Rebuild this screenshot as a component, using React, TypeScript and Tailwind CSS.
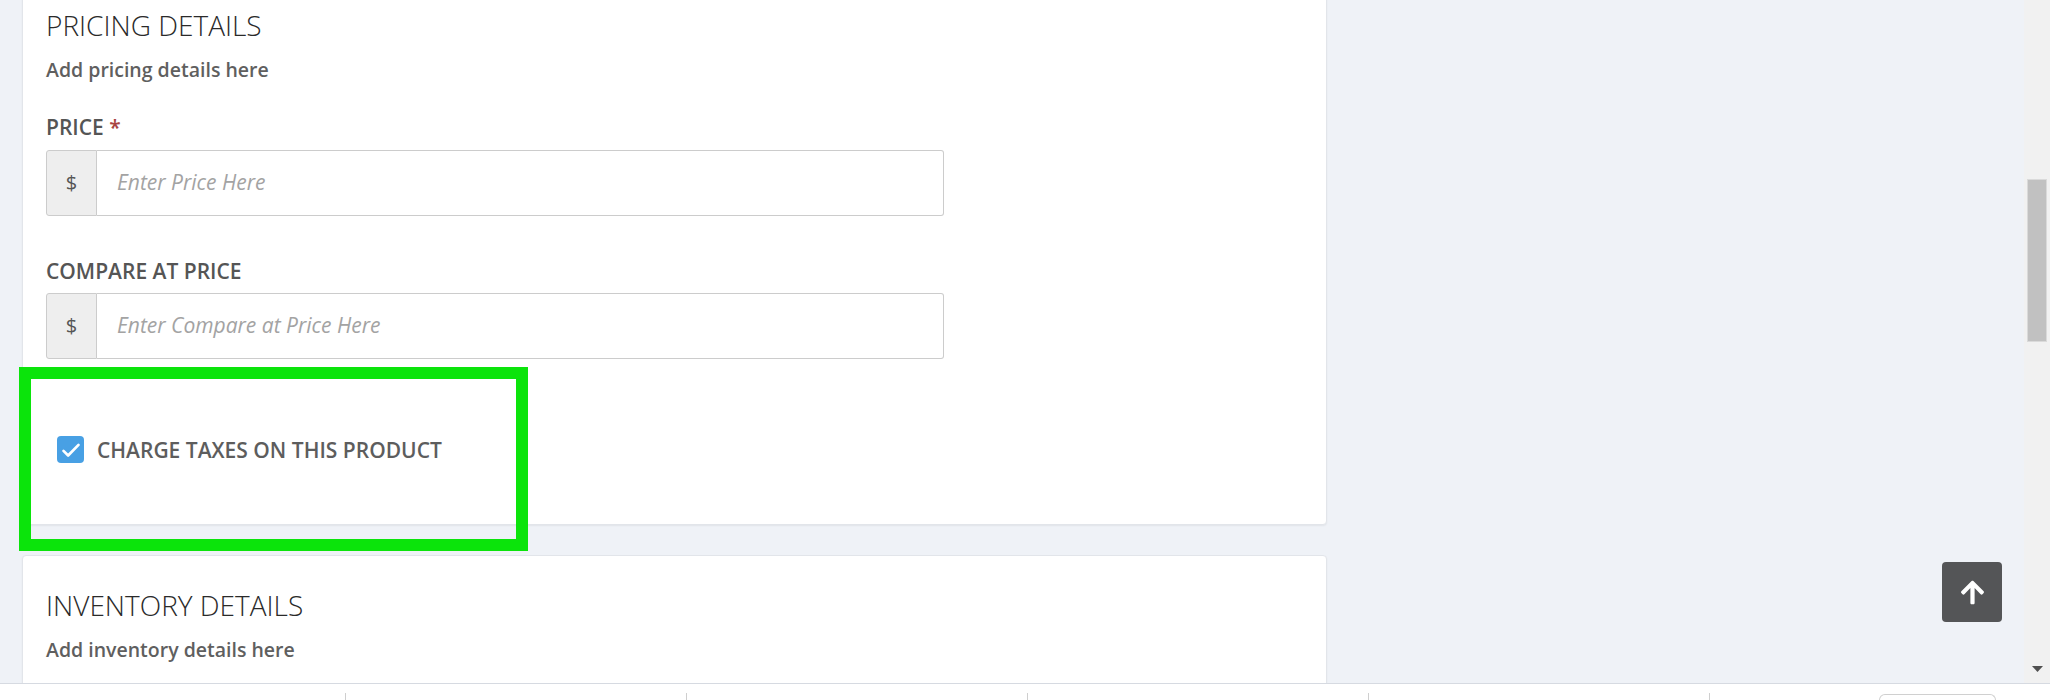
import { FaArrowUp } from 'react-icons/fa';

const font = { fontFamily: '"Open Sans", "Liberation Sans", sans-serif' };

function PriceInput({ placeholder }: { placeholder: string }) {
  return (
    <div className="flex h-[66px] w-[898px]">
      <div className="flex w-[51px] items-center justify-center rounded-l-[3px] border border-[#cccccc] bg-[#eeeeee] text-[20px] text-[#555555]">
        $
      </div>
      <div className="flex flex-1 items-center rounded-r-[3px] border border-l-0 border-[#cccccc] bg-white pl-[20px] text-[21px] italic text-[#a3a3a3]">
        {placeholder}
      </div>
    </div>
  );
}

function CardHeader({ title, desc }: { title: string; desc: string }) {
  return (
    <>
      <h2 className="text-[28px] font-light leading-[32px] text-[#2a2a2a]">{title}</h2>
      <p className="mt-[17px] text-[19.5px] font-semibold leading-[24px] text-[#5f5f5f]">{desc}</p>
    </>
  );
}

export default function App() {
  return (
    <div className="flex h-[700px] w-[2050px] flex-col overflow-hidden bg-[#eff2f7]" style={font}>
      <div className="flex h-[683px]">
        <main className="relative flex-1 overflow-hidden pl-[22px]">
          <section className="-mt-[25px] w-[1305px] rounded-[4px] border border-[#e2e5ea] bg-white px-[23px] pt-[33px] pb-[61px] shadow-[0_1px_2px_rgba(0,0,0,0.06)]">
            <CardHeader title="PRICING DETAILS" desc="Add pricing details here" />

            <label className="mt-[33px] block text-[21px] font-semibold leading-[24px] text-[#555555]">
              PRICE <span className="text-[#a94442]">*</span>
            </label>
            <div className="mt-[11px]">
              <PriceInput placeholder="Enter Price Here" />
            </div>

            <label className="mt-[43px] block text-[21px] font-semibold leading-[24px] text-[#555555]">
              COMPARE AT PRICE
            </label>
            <div className="mt-[10px]">
              <PriceInput placeholder="Enter Compare at Price Here" />
            </div>

            <div className="mt-[77px] flex items-center pl-[11px]">
              <span className="flex h-[27px] w-[27px] items-center justify-center rounded-[4px] bg-[#48a0e4]">
                <svg width="24" height="24" viewBox="0 0 16 16" fill="none">
                  <path d="M3 8.6l3.1 3.1L13 4.6" stroke="white" strokeWidth="1.8" strokeLinecap="round" strokeLinejoin="round" />
                </svg>
              </span>
              <span className="ml-[13px] text-[21px] font-semibold leading-[24px] text-[#5d5d5d]">
                CHARGE TAXES ON THIS PRODUCT
              </span>
            </div>
          </section>

          <section className="mt-[30px] w-[1305px] rounded-[4px] border border-[#e2e5ea] bg-white px-[23px] pt-[33px] pb-[40px] shadow-[0_1px_2px_rgba(0,0,0,0.06)]">
            <CardHeader title="INVENTORY DETAILS" desc="Add inventory details here" />
          </section>

          {/* annotation frame */}
          <div className="pointer-events-none absolute left-[19px] top-[367px] h-[184px] w-[509px] border-[12px] border-[#0be40b]" />

          <button className="absolute bottom-[61px] right-[22px] flex h-[60px] w-[60px] items-center justify-center rounded-[4px] bg-[#545557] text-white">
            <FaArrowUp size={27} />
          </button>
        </main>

        <div className="flex w-[26px] flex-col bg-[#f1f1f1]">
          <div className="ml-[3px] mt-[179px] h-[163px] w-[20px] border border-[#dadada] bg-[#c1c1c1]" />
          <div className="mt-auto mb-[11px] flex justify-center">
            <svg width="11" height="6" viewBox="0 0 11 6">
              <path d="M0 0h11L5.5 6z" fill="#505050" />
            </svg>
          </div>
        </div>
      </div>

      <footer className="flex h-[17px] border-t border-[#d6dae1] bg-white">
        <div className="w-[345px]" />
        <div className="mt-[9px] w-px bg-[#cfcfcf]" />
        <div className="w-[340px]" />
        <div className="mt-[9px] w-px bg-[#cfcfcf]" />
        <div className="w-[340px]" />
        <div className="mt-[9px] w-px bg-[#cfcfcf]" />
        <div className="w-[340px]" />
        <div className="mt-[9px] w-px bg-[#cfcfcf]" />
        <div className="w-[340px]" />
        <div className="mt-[9px] w-px bg-[#cfcfcf]" />
        <div className="w-[169px]" />
        <div className="mt-[10px] h-[8px] w-[117px] rounded-t-[6px] border border-b-0 border-[#d0d0d0]" />
      </footer>
    </div>
  );
}
